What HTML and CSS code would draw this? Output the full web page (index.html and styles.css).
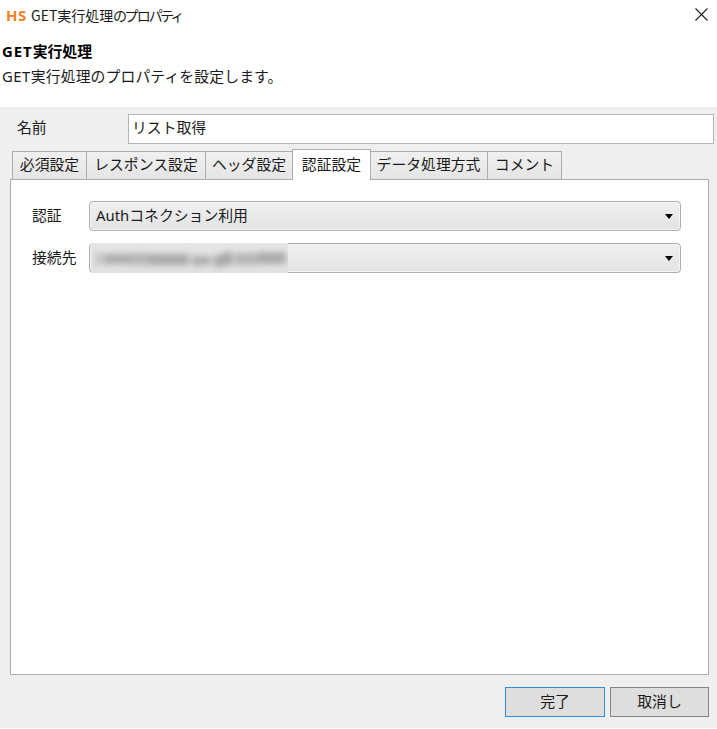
FILE: index.html
```html
<!DOCTYPE html>
<html lang="ja">
<head>
<meta charset="utf-8">
<title>GET実行処理のプロパティ</title>
<link rel="stylesheet" href="styles.css">
</head>
<body>
<div class="dialog">
  <header class="header">
    <div class="titlebar">
      <span class="logo">HS</span>
      <span class="caption">GET実行処理<span class="kana">のプロパティ</span></span>
      <svg class="close" width="13" height="13" viewBox="0 0 13 13"><path d="M.5 .5L12.5 12.5M12.5 .5L.5 12.5" stroke="#222" stroke-width="1.1"/></svg>
    </div>
    <h1><span class="latin">GET</span>実行処理</h1>
    <p><span class="latin">GET</span>実行処理のプロパティを設定します。</p>
  </header>
  <div class="name-row"><span class="label">名前</span><div class="input">リスト取得</div></div>
  <nav class="tabs">
    <div class="tab t1">必須設定</div>
    <div class="tab t2">レスポンス設定</div>
    <div class="tab t3">ヘッダ設定</div>
    <div class="tab active">認証設定</div>
    <div class="tab t5">データ処理方式</div>
    <div class="tab t6">コメント</div>
  </nav>
  <main class="panel">
    <div class="field"><span class="label">認証</span><div class="select">Authコネクション利用<i class="arrow"></i></div></div>
    <div class="field"><span class="label">接続先</span><div class="select masked">
      <svg class="mask" width="197" height="30" viewBox="0 0 197 30">
        <defs>
          <filter id="soft" x="-10%" y="-80%" width="120%" height="260%"><feGaussianBlur stdDeviation="3.2"/></filter>
          <linearGradient id="bg" x2="0" y2="1"><stop offset="0" stop-color="#e6e6e6"/><stop offset="1" stop-color="#e2e2e2"/></linearGradient>
        </defs>
        <rect width="197" height="30" fill="url(#bg)"/>
        <g filter="url(#soft)" fill="#888">
          <rect x="5" y="9" width="4" height="13" opacity=".5"/>
          <rect x="12" y="11" width="29" height="10" opacity=".62"/>
          <rect x="41" y="10" width="17" height="12" opacity=".5"/>
          <rect x="58" y="11" width="40" height="11" opacity=".66"/>
          <rect x="101" y="13" width="7" height="10" opacity=".6"/>
          <rect x="108" y="13" width="12" height="9" opacity=".6"/>
          <rect x="123" y="12" width="9" height="12" opacity=".65"/>
          <rect x="132" y="9" width="9" height="13" opacity=".68"/>
          <rect x="143" y="10" width="24" height="12" opacity=".5"/>
          <rect x="167" y="9" width="28" height="12" opacity=".62"/>
        </g>
      </svg><i class="arrow"></i></div></div>
  </main>
  <footer class="actions"><button class="primary">完了</button><button>取消し</button></footer>
</div>
</body>
</html>
```
FILE: styles.css
```css
* { box-sizing: border-box; }
body {
  margin: 0;
  background: #fff;
  color: #1a1a1a;
  font: 14.85px/22px "Noto Sans", "Noto Sans CJK JP", sans-serif;
  white-space: nowrap;
}
.dialog { height: 728px; background: #efefef; display: flex; flex-direction: column; }
.header { height: 107px; background: #fff; flex: none; }
.titlebar { height: 29px; display: flex; align-items: center; padding: 0 9px 0 6px; }
.logo { width: 25px; color: #f5801f; font: 700 15px/20px "Open Sans", sans-serif; }
.logo { letter-spacing: .4px; }
.caption { font-family: "Noto Sans CJK JP", sans-serif; font-size: 14px; }
.kana { font-feature-settings: "palt"; letter-spacing: -1.4px; }
.close { margin-left: auto; }
.latin { letter-spacing: .5px; }
h1 { margin: 11px 0 0 2px; font-size: 14.85px; line-height: 22px; font-weight: 700; color: #000; }
h1 .latin { letter-spacing: 1px; }
p { margin: 3px 0 0 2px; letter-spacing: .1px; }
.name-row { display: flex; padding: 7px 3px 0 17px; }
.name-row .label { width: 111px; line-height: 26px; }
.input { flex: 1; height: 30px; background: #fff; border: 1px solid #b4b4b9; padding-left: 3px; line-height: 25px; }
.tabs { display: flex; align-items: flex-end; height: 35px; padding-left: 12px; }
.tab { height: 28px; border: 1px solid #adadad; border-left-width: 0; border-bottom: 0; background: linear-gradient(#f0f0f0, #e5e5e5); text-align: center; line-height: 25px; }
.t1 { width: 75px; border-left-width: 1px; }
.t2 { width: 119px; }
.t3 { width: 87px; }
.active { width: 79px; height: 31px; margin: 0 0 -1px -1px; border-left-width: 1px; background: #fff; position: relative; line-height: 28px; }
.t5 { width: 117px; padding-right: 1px; }
.t6 { width: 74px; }
.panel { height: 496px; margin: 0 8px 0 10px; border: 1px solid #adadad; background: #fff; padding: 21px 27px 0 21px; }
.field { display: flex; height: 42px; }
.field .label { width: 57px; line-height: 28px; }
.select { flex: 1; height: 30px; border: 1px solid #adadad; border-radius: 4px; background: linear-gradient(#f0f0f0, #e3e3e3); box-shadow: inset 0 0 0 1px #f5f5f5; display: flex; align-items: center; padding: 0 7px 2px 6px; }
.masked { padding-left: 1px; }
.mask { margin: -1px 0 -3px; align-self: flex-start; }
.arrow { width: 0; height: 0; margin: 2px 0 0 auto; border: 4.5px solid transparent; border-top: 5.5px solid #000; border-bottom: 0; }
.actions { display: flex; justify-content: flex-end; gap: 5px; padding: 12px 8px 0 0; }
button { width: 99px; height: 30px; border: 1px solid #858585; background: #dedede; font: inherit; color: inherit; padding: 0 0 2px; }
.primary { width: 100px; border-color: #2f8ddb; }
```
